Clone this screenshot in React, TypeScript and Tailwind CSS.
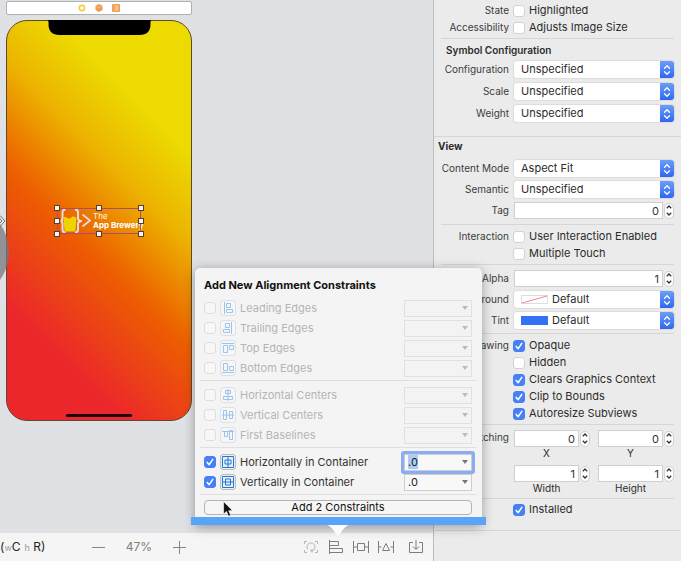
import { useEffect, useRef, type ReactNode } from "react";

function Check({ label, checked = false, disabled = false }: { label: string; checked?: boolean; disabled?: boolean }) {
  return (
    <span className="grid size-3 shrink-0 *:[grid-area:1/1]">
      <input
        type="checkbox"
        aria-label={label}
        defaultChecked={checked}
        disabled={disabled}
        className="peer size-3 appearance-none rounded-[3px] border border-[#d2d2d2] bg-white checked:border-[#4680f7] checked:bg-[#4680f7] disabled:border-[#dedede] disabled:bg-[#f7f7f7]"
      />
      <svg viewBox="0 0 12 12" className="pointer-events-none hidden size-3 peer-checked:block" fill="none" stroke="white" strokeWidth="1.5" strokeLinecap="round" strokeLinejoin="round">
        <path d="M3.2 6.4 5.2 8.7 8.8 3.4" />
      </svg>
    </span>
  );
}

function Caption({ children }: { children?: ReactNode }) {
  return <span className="w-[68px] shrink-0 text-right text-[10px] text-[#3c3c3c]">{children}</span>;
}

function CheckRow({ caption, label, checked }: { caption?: string; label: string; checked?: boolean }) {
  return (
    <div className="flex h-[17px] items-center gap-1 whitespace-nowrap">
      <Caption>{caption}</Caption>
      <label className="flex items-center gap-1">
        <Check label={label} checked={checked} />
        <span>{label}</span>
      </label>
    </div>
  );
}

function SelectRow({ caption, value, swatch }: { caption: string; value: string; swatch?: "none" | "blue" }) {
  return (
    <label className="flex h-[21px] items-center gap-[5px] whitespace-nowrap">
      <Caption>{caption}</Caption>
      <span className="grid h-[17px] min-w-0 flex-1 items-center overflow-hidden rounded-[3px] bg-white shadow-[0_0_1px_1px_#dcdcdc] *:[grid-area:1/1]">
        <select className={`h-full w-full appearance-none bg-transparent leading-[17px] outline-none ${swatch ? "pl-[38px]" : "pl-[7px]"}`}>
          <option>{value}</option>
        </select>
        {swatch && (
          <svg viewBox="0 0 27 9" className="pointer-events-none ml-[7px] h-[9px] w-[27px]">
            <rect x=".5" y=".5" width="26" height="8" fill={swatch === "blue" ? "#3371f5" : "#fff"} stroke={swatch === "blue" ? "#3371f5" : "#ddd"} />
            {swatch === "none" && <path d="M1 8 26 1" stroke="#ee8a92" />}
          </svg>
        )}
        <span className="pointer-events-none flex h-full w-3.5 items-center justify-center justify-self-end bg-linear-to-b from-[#6b9df8] to-[#2f66f3]">
          <svg viewBox="0 0 8 12" className="h-3 w-2" fill="none" stroke="white" strokeWidth="1.3" strokeLinecap="round" strokeLinejoin="round">
            <path d="M1.5 4.3 4 1.8 6.5 4.3M1.5 7.7 4 10.2 6.5 7.7" />
          </svg>
        </span>
      </span>
    </label>
  );
}

function Stepper({ label }: { label: string }) {
  return (
    <span className="flex h-4 w-2.5 shrink-0 flex-col overflow-hidden rounded-full border border-[#d0d0d0] bg-white">
      <button aria-label={`Increase ${label}`} className="flex flex-1 items-center justify-center">
        <svg viewBox="0 0 6 4" className="h-1 w-1.5" fill="none" stroke="#333" strokeWidth="1.3"><path d="M.8 3.2 3 1 5.2 3.2" /></svg>
      </button>
      <button aria-label={`Decrease ${label}`} className="flex flex-1 items-center justify-center">
        <svg viewBox="0 0 6 4" className="h-1 w-1.5" fill="none" stroke="#333" strokeWidth="1.3"><path d="M.8.8 3 3 5.2.8" /></svg>
      </button>
    </span>
  );
}

function NumberInput({ label, value }: { label: string; value: string }) {
  return (
    <input
      aria-label={label}
      defaultValue={value}
      className="h-[17px] w-full min-w-0 border border-[#cfcfcf] bg-white px-[3px] text-right text-[11px] text-[#333] outline-none"
    />
  );
}

function NumberRow({ caption, value }: { caption: string; value: string }) {
  return (
    <div className="flex h-[21px] items-center gap-[5px]">
      <Caption>{caption}</Caption>
      <div className="flex min-w-0 flex-1 items-center gap-px">
        <NumberInput label={caption} value={value} />
        <Stepper label={caption} />
      </div>
    </div>
  );
}

function Stretch({ label, value }: { label: string; value: string }) {
  return (
    <div className="grid min-w-0 flex-1 grid-cols-[1fr_auto] items-center gap-x-px">
      <NumberInput label={label} value={value} />
      <Stepper label={label} />
      <span className="text-center text-[10px] leading-3">{label}</span>
    </div>
  );
}

function Group({ className, children }: { className: string; children: ReactNode }) {
  return <section className={`mx-[7px] border-b border-[#d6d6d6] ${className}`}>{children}</section>;
}

function Inspector() {
  return (
    <aside className="w-62 shrink-0 border-l border-[#bdbdbd] bg-[#ebebeb] text-[11px] text-[#2c2c2c]">
      <Group className="py-0.5">
        <CheckRow caption="State" label="Highlighted" />
        <CheckRow caption="Accessibility" label="Adjusts Image Size" />
      </Group>
      <div className="border-b border-[#d6d6d6] px-[7px] pt-0.5 pb-3">
        <h2 className="pl-[5px] text-[10px] leading-[18px] font-semibold">Symbol Configuration</h2>
        <div className="flex flex-col gap-px">
          <SelectRow caption="Configuration" value="Unspecified" />
          <SelectRow caption="Scale" value="Unspecified" />
          <SelectRow caption="Weight" value="Unspecified" />
        </div>
      </div>
      <Group className="pb-[3px]">
        <h2 className="-ml-[3px] pb-[3px] text-[10px] leading-[18px] font-bold">View</h2>
        <SelectRow caption="Content Mode" value="Aspect Fit" />
        <SelectRow caption="Semantic" value="Unspecified" />
        <NumberRow caption="Tag" value="0" />
      </Group>
      <Group className="pt-[3px] pb-0.5">
        <CheckRow caption="Interaction" label="User Interaction Enabled" />
        <CheckRow label="Multiple Touch" />
      </Group>
      <Group className="pt-[3px] pb-0.5">
        <NumberRow caption="Alpha" value="1" />
        <SelectRow caption="Background" value="Default" swatch="none" />
        <SelectRow caption="Tint" value="Default" swatch="blue" />
      </Group>
      <Group className="pt-[3px] pb-0.5">
        <CheckRow caption="Drawing" label="Opaque" checked />
        <CheckRow label="Hidden" />
        <CheckRow label="Clears Graphics Context" checked />
        <CheckRow label="Clip to Bounds" checked />
        <CheckRow label="Autoresize Subviews" checked />
      </Group>
      <Group className="flex flex-col gap-1.5 pt-[5px] pb-1">
        <div className="flex gap-[5px]">
          <Caption>Stretching</Caption>
          <div className="flex flex-1 gap-2">
            <Stretch label="X" value="0" />
            <Stretch label="Y" value="0" />
          </div>
        </div>
        <div className="flex gap-[5px]">
          <Caption />
          <div className="flex flex-1 gap-2">
            <Stretch label="Width" value="1" />
            <Stretch label="Height" value="1" />
          </div>
        </div>
      </Group>
      <div className="border-b border-[#d6d6d6] px-[7px] pt-0.5 pb-3">
        <CheckRow label="Installed" checked />
      </div>
    </aside>
  );
}

const glyphs: Record<string, string> = {
  "Leading Edges": "M3.5 1v12M5.5 2.5h4v4h-4zM5.5 8.5h6v3h-6z",
  "Trailing Edges": "M10.5 1v12M4.5 2.5h4v4h-4zM2.5 8.5h6v3h-6z",
  "Top Edges": "M1 2.5h12M2.5 4.5h4v7h-4zM8.5 4.5h4v4h-4z",
  "Bottom Edges": "M1 11.5h12M2.5 2.5h4v7h-4zM8.5 5.5h4v4h-4z",
  "Horizontal Centers": "M7 1v12M4.5 2.5h5v3h-5zM2.5 8.5h9v3h-9z",
  "Vertical Centers": "M1 7h12M2.5 2.5h3v9h-3zM8.5 3.5h3v7h-3z",
  "First Baselines": "M1 3.5h12M3.5 3.5h3v5h-3zM8.5 2.5h3v9h-3z",
  "Horizontally in Container": "M1.5 1.5h11v11h-11zM7 2v10M4 5h6v4H4z",
  "Vertically in Container": "M1.5 1.5h11v11h-11zM2 7h10M4.500 4h5v6h-5z",
};

function Constraint({ name, active = false, focused = false }: { name: string; active?: boolean; focused?: boolean }) {
  const field = useRef<HTMLInputElement>(null);
  useEffect(() => {
    if (focused) {
      field.current?.focus();
      field.current?.select();
    }
  }, [focused]);
  return (
    <div className="flex h-5 items-center justify-between">
      <label className={`flex items-center gap-1 whitespace-nowrap ${active ? "text-[#333]" : "text-[#b4b4b4]"}`}>
        <Check label={name} checked={active} disabled={!active} />
        <svg viewBox="0 0 14 14" className={`mx-px size-3.5 rounded-[2px] outline ${active ? "bg-[#e8eef5] outline-[#b9bcc0]" : "bg-[#f4f6f8] outline-[#e0e0e0]"}`} fill="none" stroke={active ? "#2478cf" : "#9cc4ee"} strokeWidth="1">
          <path d={glyphs[name]} />
        </svg>
        <span>{name}</span>
      </label>
      <span className={`grid h-[17px] w-17 items-center border *:[grid-area:1/1] ${active ? "border-[#cdcdcd] bg-[#f8f8f8]" : "border-[#e0e0e0] bg-[#f3f3f3]"} ${focused ? "rounded-[1px] ring-3 ring-[#8cabf0]" : ""}`}>
        <input
          ref={field}
          aria-label={`${name} constant`}
          disabled={!active}
          defaultValue={active ? ".0" : ""}
          className="h-full w-full min-w-0 pl-[3px] text-[11px] text-[#222] outline-none selection:bg-[#a8cdf9] selection:text-[#222]"
        />
        <button aria-label={`${name} options`} disabled={!active} className="mr-[3px] justify-self-end">
          <svg viewBox="0 0 6 4" className="h-1 w-1.5" fill={active ? "#777" : "#bbb"}><path d="M0 0h6L3 4z" /></svg>
        </button>
      </span>
    </div>
  );
}

function Popover() {
  return (
    <div className="absolute -right-[49px] bottom-9 z-10 w-[287px] rounded-t-[5px] bg-[#f4f4f4] text-[11px] shadow-[0_2px_12px_rgba(0,0,0,0.35)]">
      <div className="pt-2 pr-1.5 pl-[5px]">
        <h2 className="mb-1 pl-1 leading-[18px] font-bold text-[#111]">Add New Alignment Constraints</h2>
        <div className="border-b border-[#dfdfdf] px-1 pb-0.5">
          <Constraint name="Leading Edges" />
          <Constraint name="Trailing Edges" />
          <Constraint name="Top Edges" />
          <Constraint name="Bottom Edges" />
        </div>
        <div className="border-b border-[#dfdfdf] px-1 pt-1 pb-0.5">
          <Constraint name="Horizontal Centers" />
          <Constraint name="Vertical Centers" />
          <Constraint name="First Baselines" />
        </div>
        <div className="border-b border-[#dfdfdf] px-1 pt-1 pb-0.5">
          <Constraint name="Horizontally in Container" active focused />
          <Constraint name="Vertically in Container" active />
        </div>
        <div className="relative px-1 pt-[5px] pb-0.5">
          <button className="block h-[15px] w-full rounded-[4px] border border-[#b4b4b4] bg-[#f6f6f6] leading-[13px] text-[#111]">
            Add 2 Constraints
          </button>
          <svg viewBox="0 0 10 16" className="pointer-events-none absolute top-1.5 left-[23px] h-4 w-2.5" fill="#111" stroke="white" strokeWidth=".6">
            <path d="M.6.6v12.400l2.900-2.600 2 4.800 2.200-.9-2-4.600h3.800z" />
          </svg>
        </div>
      </div>
      <div className="-mx-1 h-2 bg-[#58a4f6]" />
      <svg viewBox="0 0 22 11" className="absolute top-full left-[132px] h-[11px] w-[22px]" fill="#fbfbfb">
        <path d="M0 0h22c-4 1-7 6-9 9q-2 3-4 0C7 6 4 1 0 0z" />
      </svg>
    </div>
  );
}

function Handles() {
  return (
    <svg viewBox="0 0 90 32" className="absolute -top-[3px] -left-[3px] h-8 w-[90px]">
      <rect x="3.5" y="3.5" width="83" height="25" fill="none" stroke="#a5506f" />
      {[3, 45, 87].map((x) =>
        [3, 16, 29].map((y) =>
          x === 45 && y === 16 ? null : (
            <rect key={`${x}-${y}`} x={x - 2.5} y={y - 2.5} width="5" height="5" fill="#fbf3ee" stroke="#55402f" />
          ),
        ),
      )}
    </svg>
  );
}

function Canvas() {
  return (
    <div className="relative flex-1 overflow-hidden bg-[#e0e1e5]">
      <div className="ml-1.5 flex w-[186px] flex-col gap-1.5">
        <div className="mt-px flex h-3.5 items-center justify-center gap-[9px] rounded-[2px] border border-[#b0b0b4] bg-white">
          <svg viewBox="0 0 8 8" className="size-2"><circle cx="4" cy="4" r="2.700" fill="#fffbe8" stroke="#f2cd3a" strokeWidth="1.500" /></svg>
          <svg viewBox="0 0 7 7" className="size-2"><path d="M3.5 0 6.6 1.5v3.8L3.5 7 .4 5.300V1.500z" fill="#ef9a4e" /><path d="M1 2l2.500 1.200L6 2" fill="none" stroke="#f8c491" strokeWidth=".6" /></svg>
          <svg viewBox="0 0 7 7" className="size-2"><rect width="7" height="7" rx=".8" fill="#f09f55" /><path d="M2 1.800h3v3.400H2M2.500 3.500h2" fill="none" stroke="#fbdcbc" strokeWidth=".8" /></svg>
        </div>
        <div className="relative -mt-px flex h-[401px] items-center justify-center rounded-[21px] border border-[#5c4a2c] bg-[linear-gradient(45deg,#ec272b_20%,#ec6000_44%,#ecb400_62%,#ecda00_77%)]">
          <svg viewBox="0 0 105 16" className="absolute -top-px left-10 h-4 w-[105px]">
            <path d="M0 0h105q-1.500 0-1.500 2v2q0 11-11 11h-80q-11 0-11-11V2q0-2-1.500-2z" />
          </svg>
          <div className="relative flex h-[26px] w-21 items-center">
            <svg viewBox="0 0 36 26" className="h-[26px] w-9 shrink-0" fill="none" stroke="#e8dcdc" strokeWidth="2">
              <path d="M8.500 1.500Q5.500 1.500 5.500 4.500v5.500q0 3-2 3 2 0 2 3v5.500q0 3 3 3M18 1.500q3 0 3 3v5.500q0 3 4 3-4 0-4 3v5.500q0 3-3 3" />
              <path d="M25.500 6.500l7.500 6-7.500 6" strokeWidth="1.700" />
              <path d="M6.500 10q1.500-2.500 4 0 2.500 1.500 5-1.500 3-.5 4 2l-1 12q0 1-1 1h-9q-1 0-1-1z" fill="#edd400" stroke="none" />
            </svg>
            <div className="text-[8px] leading-[9px] whitespace-nowrap text-white">
              <div className="text-white/90">The</div>
              <div className="font-bold">App Brewery</div>
            </div>
            <Handles />
          </div>
          <div className="absolute bottom-[3px] left-[59px] h-[3px] w-[66px] rounded-full bg-[#1c0506]" />
        </div>
      </div>
      <div className="absolute top-[204px] -left-[87px] size-24 rounded-full bg-[#77777a]/75" />
      <svg viewBox="0 0 6 12" className="absolute top-[215px] left-0 h-3 w-1.5" fill="none" stroke="#77777a">
        <path d="M0 .5 5 6 0 11.500M0 4l2 2-2 2" />
      </svg>
    </div>
  );
}

function Tool({ label, d, faded = false }: { label: string; d: string; faded?: boolean }) {
  return (
    <button aria-label={label}>
      <svg viewBox="0 0 16 14" className="h-3.5 w-4" fill="none" stroke={faded ? "#b5b5b5" : "#7d7d7d"} strokeWidth="1">
        <path d={d} />
      </svg>
    </button>
  );
}

function Toolbar() {
  return (
    <footer className="flex h-7 shrink-0 items-center justify-between bg-[#f5f5f5] pr-[9px] text-[12px] text-[#808080]">
      <div className="flex items-center">
        <div className="flex w-[92px] items-baseline gap-1 whitespace-nowrap text-[#222]">
          <span>(<span className="text-[9px] text-[#999]">w</span>C</span>
          <span><span className="text-[9px] text-[#999]">h</span> R)</span>
        </div>
        <div className="flex items-center gap-5">
          <button aria-label="Zoom out">
            <svg viewBox="0 0 13 13" className="size-[13px]" stroke="#858585"><path d="M0 6.500h13" /></svg>
          </button>
          <span className="w-7 text-center">47%</span>
          <button aria-label="Zoom in">
            <svg viewBox="0 0 13 13" className="size-[13px]" stroke="#858585"><path d="M0 6.500h13M6.500 0v13" /></svg>
          </button>
        </div>
      </div>
      <div className="flex items-center gap-3.5">
        <div className="flex items-center gap-[9px]">
          <Tool label="Update frames" faded d="M1.500 4V1.500H4M12 1.500h2.500V4M14.500 10v2.500H12M4 12.500H1.500V10M5 9.500A4 4 0 1 1 9 10.800M9 8.800v3.700M9 10.800H7" />
          <Tool label="Align" d="M1.500 0v14M1.500 1.500h9v4h-9M1.500 8.500h13v4h-13" />
          <Tool label="Add new constraints" d="M.5 1v12M15.500 1v12M.5 7H4M12 7h3.500M4.500 3.500h7v7h-7z" />
          <Tool label="Resolve issues" d="M.5 1v12M15.500 1v12M.5 7h3M12.500 7h3M8 3.500 11.500 10.500h-7z" />
        </div>
        <Tool label="Embed in" d="M5 2.500H1.500v10h13v-10H11M8 0v9M5 6.500l3 3 3-3" />
      </div>
    </footer>
  );
}

export default function App() {
  return (
    <div className="flex h-screen overflow-hidden font-[Inter,'Noto_Sans',sans-serif]">
      <main className="relative flex min-w-0 flex-1 flex-col">
        <Canvas />
        <Toolbar />
        <Popover />
      </main>
      <Inspector />
    </div>
  );
}
